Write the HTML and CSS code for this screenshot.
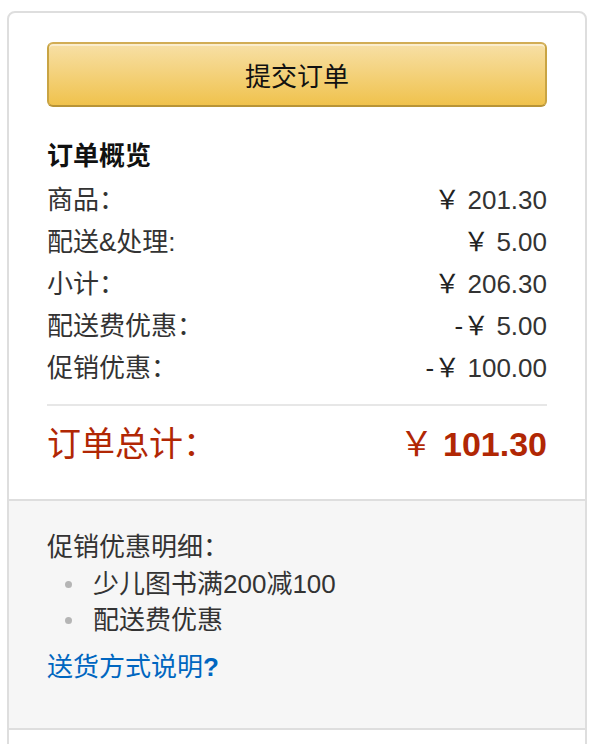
FILE: index.html
```html
<!DOCTYPE html>
<html lang="zh-CN">
<head>
<meta charset="utf-8">
<title>订单概览</title>
<link rel="stylesheet" href="styles.css">
</head>
<body>
<div class="card">
  <section class="summary">
    <button class="submit" type="button">提交订单</button>
    <h3 class="title">订单概览</h3>
    <div class="row"><span class="label">商品：</span><span class="amt"><span class="yen">￥</span> 201.30</span></div>
    <div class="row"><span class="label">配送&amp;处理:</span><span class="amt"><span class="yen">￥</span> 5.00</span></div>
    <div class="row"><span class="label">小计：</span><span class="amt"><span class="yen">￥</span> 206.30</span></div>
    <div class="row"><span class="label">配送费优惠：</span><span class="amt"><span class="yen">-￥</span> 5.00</span></div>
    <div class="row"><span class="label">促销优惠：</span><span class="amt"><span class="yen">-￥</span> 100.00</span></div>
    <hr class="divider">
    <div class="total"><span class="label">订单总计：</span><span class="amt"><span class="yen">￥</span> <b>101.30</b></span></div>
  </section>
  <section class="promo">
    <div class="promo-head">促销优惠明细：</div>
    <ul class="promo-list">
      <li>少儿图书满200减100</li>
      <li>配送费优惠</li>
    </ul>
    <a class="link" href="#">送货方式说明<b>?</b></a>
  </section>
  <section class="more"></section>
</div>
</body>
</html>
```
FILE: styles.css
```css
html, body {
  margin: 0;
  padding: 0;
  background: #fff;
  overflow: hidden;
}
body {
  font-family: "Liberation Sans", "Noto Sans CJK SC", sans-serif;
  font-size: 26px;
  color: #333;
}
.card {
  box-sizing: border-box;
  width: 580px;
  margin: 11px 0 0 7px;
  border: 2px solid #dedede;
  border-radius: 8px;
  overflow: hidden;
}
.summary {
  padding: 29px 38px 31px;
}
.submit {
  display: block;
  box-sizing: border-box;
  width: 100%;
  height: 65px;
  border: 2px solid;
  border-color: #d2ad55 #c9a443 #b89437;
  border-radius: 6px;
  background: linear-gradient(to bottom, #f7e0a6, #f0c24d);
  box-shadow: inset 0 2px 0 rgba(255, 255, 255, 0.45);
  font-family: inherit;
  font-size: 26px;
  color: #111;
  padding: 0;
}
.title {
  margin: 28px 0 2px;
  font-size: 26px;
  line-height: 42px;
  font-weight: bold;
  color: #111;
}
.row {
  display: flex;
  justify-content: space-between;
  line-height: 42px;
}
.yen {
  color: #222;
}
.divider {
  border: 0;
  height: 2px;
  background: #e7e7e7;
  margin: 15px 0 14px;
}
.total {
  display: flex;
  justify-content: space-between;
  line-height: 48px;
  font-size: 34px;
  color: #b12704;
}
.total .yen {
  color: #b12704;
  font-weight: normal;
}
.total b {
  font-weight: bold;
}
.promo {
  border-top: 2px solid #dedede;
  background: #f6f6f6;
  padding: 28px 38px 43px;
}
.promo-head {
  line-height: 37px;
}
.promo-list {
  list-style: none;
  margin: 0;
  padding: 0;
}
.promo-list li {
  display: flex;
  align-items: center;
  line-height: 36px;
}
.promo-list li::before {
  content: "";
  width: 7px;
  height: 7px;
  border-radius: 50%;
  background: #b5b5b5;
  margin: 0 21px 0 18px;
  flex: none;
}
.link {
  display: block;
  margin-top: 11px;
  line-height: 36px;
  color: #0066c0;
  text-decoration: none;
}
.link b {
  font-weight: bold;
}
.more {
  border-top: 2px solid #dedede;
  height: 80px;
}
```
